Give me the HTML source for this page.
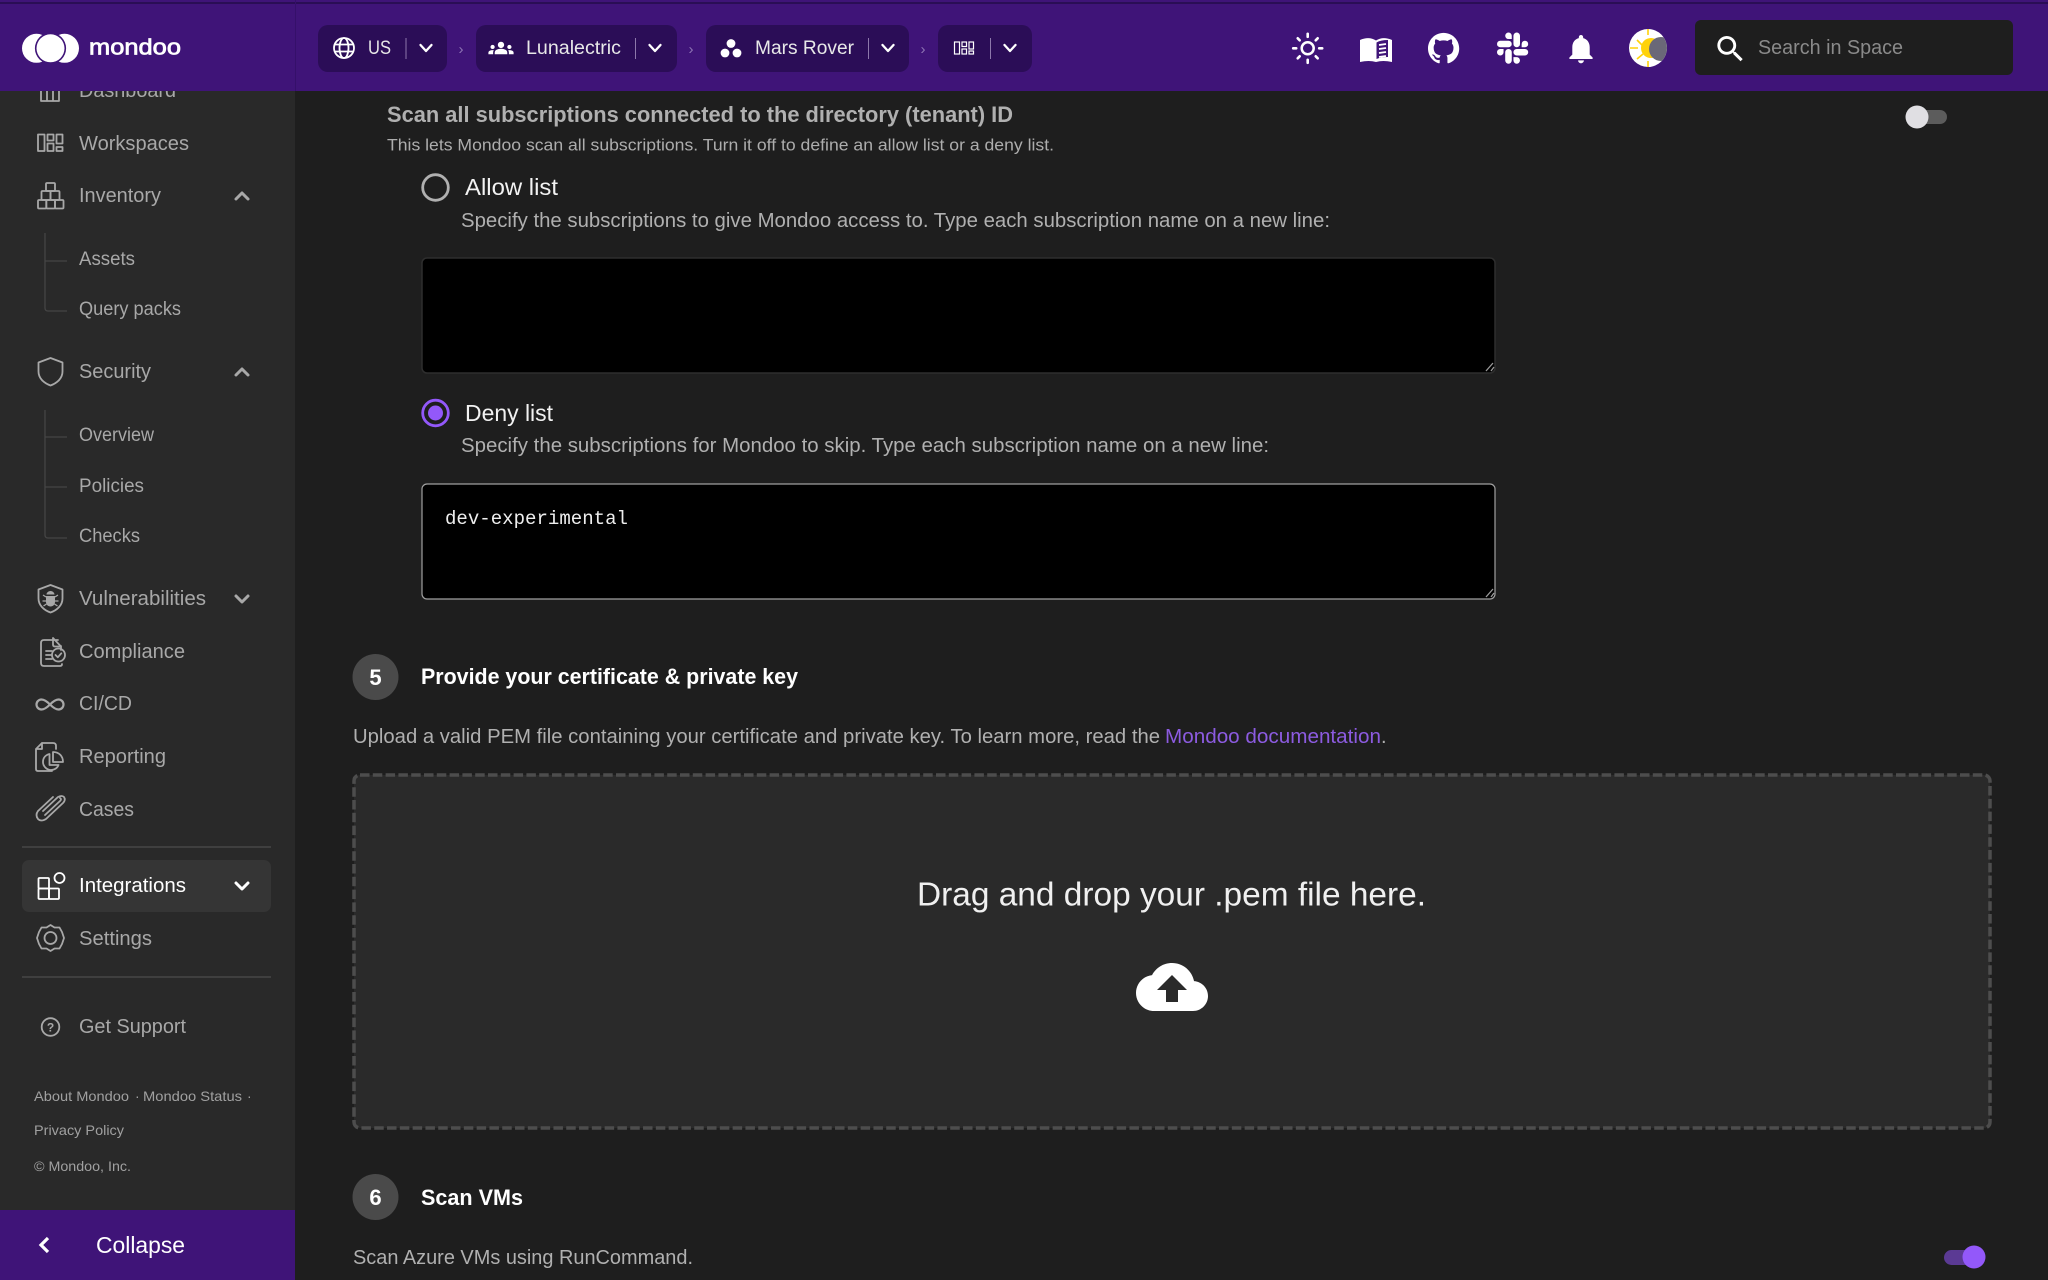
<!DOCTYPE html>
<html lang="en"><head><meta charset="utf-8"><title>Mondoo</title>
<style>
html,body{margin:0;padding:0;background:#1e1e1e;width:2048px;height:1280px;overflow:hidden}
svg{display:block;font-family:"Liberation Sans",Arial,sans-serif}
.n{fill:#a8a8a8;font-size:20px}
.s{fill:#a8a8a8;font-size:19px}
.f{fill:#a0a0a0;font-size:14px}
.w{fill:#fff}
.i{fill:none;stroke:#a8a8a8;stroke-width:1.8;stroke-linejoin:round;stroke-linecap:round}
.t{fill:none;stroke:#454545;stroke-width:1.3}
.c{fill:none;stroke:#fff;stroke-width:3;stroke-linecap:round;stroke-linejoin:round}
.p{fill:#b0b0b0;font-size:20px}
</style></head><body>
<svg xmlns="http://www.w3.org/2000/svg" width="2048" height="1280" viewBox="0 0 2048 1280">
<rect width="2048" height="1280" fill="#1e1e1e"/>
<!-- sidebar -->
<rect x="0" y="0" width="295" height="1280" fill="#292929"/>
<path class="i" d="M41 85h18v16H41zM47 85v16M53 85v16"/>
<text class="n" x="79" y="97" textLength="97" lengthAdjust="spacingAndGlyphs">Dashboard</text>
<g class="i"><rect x="38" y="134.500" width="6.500" height="16.500"/><rect x="47.500" y="134.500" width="6" height="6"/><rect x="47.500" y="143.500" width="6" height="7.500"/><rect x="56.500" y="134.500" width="6" height="9"/><rect x="56.500" y="147" width="6" height="4"/></g>
<text class="n" x="79" y="150" textLength="110" lengthAdjust="spacingAndGlyphs">Workspaces</text>
<g class="i"><rect x="46" y="183" width="9" height="8" rx="1"/><rect x="41.500" y="191" width="9" height="9" rx="1"/><rect x="50.500" y="191" width="9" height="9" rx="1"/><rect x="38" y="200" width="8.300" height="8.500" rx="1"/><rect x="46.300" y="200" width="8.700" height="8.500" rx="1"/><rect x="55" y="200" width="8.500" height="8.500" rx="1"/></g>
<text class="n" x="79" y="202" textLength="82" lengthAdjust="spacingAndGlyphs">Inventory</text>
<path class="c" style="stroke:#a8a8a8" d="M236 199l6-6 6 6"/>
<path class="t" d="M45 233v75q0 3 3 3h19M45 261h22"/>
<text class="s" x="79" y="265" textLength="56" lengthAdjust="spacingAndGlyphs">Assets</text>
<text class="s" x="79" y="315" textLength="102" lengthAdjust="spacingAndGlyphs">Query packs</text>
<path class="i" d="M50.500 358l12 4.500v9c0 6.500-5 11.500-12 14-7-2.500-12-7.500-12-14v-9z"/>
<text class="n" x="79" y="378" textLength="72" lengthAdjust="spacingAndGlyphs">Security</text>
<path class="c" style="stroke:#a8a8a8" d="M236 375l6-6 6 6"/>
<path class="t" d="M45 410v125q0 3 3 3h19M45 437h22M45 487h22"/>
<text class="s" x="79" y="441" textLength="75" lengthAdjust="spacingAndGlyphs">Overview</text>
<text class="s" x="79" y="492" textLength="65" lengthAdjust="spacingAndGlyphs">Policies</text>
<text class="s" x="79" y="542" textLength="61" lengthAdjust="spacingAndGlyphs">Checks</text>
<path class="i" d="M50.500 585l12 4.500v9c0 6.500-5 11.500-12 14-7-2.500-12-7.500-12-14v-9z"/>
<path d="M50.500 591c2.500 0 4 2 4 3.500h-8c0-1.500 1.500-3.500 4-3.500zM46 596h9v6c0 2.500-2 4.500-4.500 4.500S46 604.500 46 602z" fill="#a8a8a8"/><path d="M43 595l3 2M58 595l-3 2M42.500 601H46M58.500 601H55M43.500 606l3-2M57.500 606l-3-2" stroke="#a8a8a8" stroke-width="1.300" fill="none"/>
<text class="n" x="79" y="605" textLength="127" lengthAdjust="spacingAndGlyphs">Vulnerabilities</text>
<path class="c" style="stroke:#a8a8a8" d="M236 596l6 6 6-6"/>
<path class="i" d="M58 640H44q-3 0-3 3v20q0 3 3 3h16q2 0 2-2M53 638.500v6q0 2 2 2h6l-8-8.500zM61 646v4M46 651h6M46 655h5M46 659h6"/>
<circle class="i" cx="58.500" cy="655" r="6.500"/><path class="i" d="M55.500 655l2.300 2.300 3.500-4"/>
<text class="n" x="79" y="658" textLength="106" lengthAdjust="spacingAndGlyphs">Compliance</text>
<path class="i" style="stroke-width:2.200" d="M50 704.500c-3-3-5.500-5-8.500-5s-5 2.500-5 5 2 5 5 5 5.500-2 8.500-5 5.500-5 8.500-5 5 2.500 5 5-2 5-5 5-5.500-2-8.500-5z"/>
<text class="n" x="79" y="710" textLength="53" lengthAdjust="spacingAndGlyphs">CI/CD</text>
<path class="i" d="M42 743h11q3 0 3 3v3M42 743l-6 6v20q0 2 2 2h14M42 743v6h-6"/>
<path class="i" d="M53 752v10h10c0-6-4-10-10-10z"/><path class="i" d="M49.500 754c-4 1-6.500 4-6.500 8s3.500 8 8 8c3.500 0 6.500-2 7.500-5H49.500z"/>
<text class="n" x="79" y="763" textLength="87" lengthAdjust="spacingAndGlyphs">Reporting</text>
<path class="i" d="M43 811l15-14q4-2 6 0 2 3-1 6l-17 16q-5 3-8 0-3-4 0-8l15-14M45 815l15-14q2-2 0-3"/>
<text class="n" x="79" y="816" textLength="55" lengthAdjust="spacingAndGlyphs">Cases</text>
<rect x="22" y="846" width="249" height="2" fill="#3f3f3f"/>
<rect x="22" y="860" width="249" height="52" rx="7" fill="#353535"/>
<g fill="none" stroke="#fff" stroke-width="1.800"><rect x="38.500" y="878" width="10.500" height="10.500" rx="1"/><rect x="38.500" y="888.500" width="10.500" height="10.500" rx="1"/><rect x="49" y="888.500" width="10" height="10.500" rx="1"/><circle cx="59.500" cy="878" r="5"/></g>
<text class="n" x="79" y="892" textLength="107" lengthAdjust="spacingAndGlyphs" style="fill:#fff">Integrations</text>
<path class="c" d="M236 883l6 6 6-6"/>
<path class="i" d="M50.500 925l4 2.500h5l2.500 4.500 2 6-2 6-2.500 4.500h-5l-4 2.500-4-2.500h-5L39 944l-2-6 2-6 2.500-4.500h5z"/><circle class="i" cx="50.500" cy="938" r="6"/>
<text class="n" x="79" y="945" textLength="73" lengthAdjust="spacingAndGlyphs">Settings</text>
<rect x="22" y="976" width="249" height="2" fill="#3f3f3f"/>
<circle class="i" cx="50.500" cy="1027" r="8.800"/>
<text x="50.500" y="1031.500" text-anchor="middle" font-size="12" font-weight="700" fill="#a8a8a8">?</text>
<text class="n" x="79" y="1033" textLength="107" lengthAdjust="spacingAndGlyphs">Get Support</text>
<text class="f" x="34" y="1101" textLength="95" lengthAdjust="spacingAndGlyphs">About Mondoo</text>
<text class="f" x="135" y="1101">·</text>
<text class="f" x="143" y="1101" textLength="99" lengthAdjust="spacingAndGlyphs">Mondoo Status</text>
<text class="f" x="247" y="1101">·</text>
<text class="f" x="34" y="1135" textLength="90" lengthAdjust="spacingAndGlyphs">Privacy Policy</text>
<text class="f" x="34" y="1171" textLength="97" lengthAdjust="spacingAndGlyphs">© Mondoo, Inc.</text>
<rect x="0" y="1210" width="295" height="70" fill="#3f1478"/>
<path d="M48 1238l-7 7 7 7" fill="none" stroke="#fff" stroke-width="3.200"/>
<text x="96" y="1253" font-size="23" fill="#fff" textLength="89" lengthAdjust="spacingAndGlyphs">Collapse</text>
<!-- main -->
<text x="387" y="122" font-size="22" font-weight="700" fill="#b0b0b0" textLength="626" lengthAdjust="spacingAndGlyphs">Scan all subscriptions connected to the directory (tenant) ID</text>
<text x="387" y="150.500" font-size="17" fill="#adadad" textLength="667" lengthAdjust="spacingAndGlyphs">This lets Mondoo scan all subscriptions. Turn it off to define an allow list or a deny list.</text>
<rect x="1918" y="110" width="29" height="14" rx="7" fill="#5c5c5c"/><circle cx="1917" cy="117" r="11.500" fill="#e0dfe3"/>
<circle cx="435.500" cy="187.500" r="12.800" fill="none" stroke="#b0b0b0" stroke-width="2.800"/>
<text x="465" y="195" font-size="23" fill="#f2f2f2" textLength="93" lengthAdjust="spacingAndGlyphs">Allow list</text>
<text class="p" x="461" y="227" textLength="869" lengthAdjust="spacingAndGlyphs">Specify the subscriptions to give Mondoo access to. Type each subscription name on a new line:</text>
<rect x="422" y="258" width="1073" height="115" rx="5" fill="#000" stroke="#2e2e2e" stroke-width="1.500"/>
<path d="M1486 371l7-8M1491 371l3-4" stroke="#9a9a9a" stroke-width="1.300" fill="none"/>
<circle cx="435.500" cy="413" r="12.800" fill="none" stroke="#9358fa" stroke-width="2.800"/><circle cx="435.500" cy="413" r="7.500" fill="#9358fa"/>
<text x="465" y="421" font-size="23" fill="#f2f2f2" textLength="88" lengthAdjust="spacingAndGlyphs">Deny list</text>
<text class="p" x="461" y="452" textLength="808" lengthAdjust="spacingAndGlyphs">Specify the subscriptions for Mondoo to skip. Type each subscription name on a new line:</text>
<rect x="422" y="484" width="1073" height="115" rx="5" fill="#000" stroke="#a0a0a0" stroke-width="1.200"/>
<path d="M1486 597l7-8M1491 597l3-4" stroke="#9a9a9a" stroke-width="1.300" fill="none"/>
<text x="445" y="524" font-family="'Liberation Mono',monospace" font-size="19" fill="#eee" textLength="183" lengthAdjust="spacingAndGlyphs">dev-experimental</text>
<circle cx="375.500" cy="677" r="23" fill="#4a4a4a"/>
<text x="375.500" y="685" text-anchor="middle" font-size="22" font-weight="700" fill="#fff">5</text>
<text x="421" y="684" font-size="22" font-weight="700" fill="#fff" textLength="377" lengthAdjust="spacingAndGlyphs">Provide your certificate &amp; private key</text>
<text class="p" x="353" y="743" textLength="807" lengthAdjust="spacingAndGlyphs">Upload a valid PEM file containing your certificate and private key. To learn more, read the</text>
<text x="1165" y="743" font-size="20" fill="#8c5be0" textLength="216" lengthAdjust="spacingAndGlyphs">Mondoo documentation</text>
<text class="p" x="1381" y="743">.</text>
<rect x="354" y="775" width="1636" height="353" rx="6" fill="#2a2a2a" stroke="#4d4d4d" stroke-width="3.500" stroke-dasharray="9.500 3.300"/>
<text x="917" y="905.500" font-size="33" fill="#f0f0f0" textLength="509" lengthAdjust="spacingAndGlyphs">Drag and drop your .pem file here.</text>
<path transform="translate(1136 951) scale(3)" fill="#fff" d="M19.35 10.04C18.67 6.59 15.64 4 12 4 9.11 4 6.6 5.64 5.35 8.04 2.34 8.36 0 10.91 0 14c0 3.31 2.69 6 6 6h13c2.76 0 5-2.24 5-5 0-2.64-2.05-4.78-4.65-4.96zM14 13v4h-4v-4H7l5-5 5 5h-3z"/>
<circle cx="375.500" cy="1197" r="23" fill="#4a4a4a"/>
<text x="375.500" y="1205" text-anchor="middle" font-size="22" font-weight="700" fill="#fff">6</text>
<text x="421" y="1205" font-size="22" font-weight="700" fill="#fff" textLength="102" lengthAdjust="spacingAndGlyphs">Scan VMs</text>
<text class="p" x="353" y="1264" textLength="340" lengthAdjust="spacingAndGlyphs">Scan Azure VMs using RunCommand.</text>
<rect x="1944" y="1250" width="30" height="15" rx="7.500" fill="#5b3a94"/><circle cx="1974" cy="1257" r="11.500" fill="#9358fa"/>
<!-- header -->
<rect x="0" y="0" width="2048" height="91" fill="#3f1478"/>
<rect x="0" y="2" width="2048" height="2" fill="#2a0e55"/>
<rect x="295" y="0" width="1" height="91" fill="#35106a"/>
<circle cx="36.500" cy="48.300" r="14.500" fill="#fff"/><circle cx="64.500" cy="48.300" r="14.500" fill="#fff"/><circle cx="50.500" cy="48.300" r="15.600" fill="#3f1478"/><circle cx="50.500" cy="48.300" r="14" fill="#fff"/>
<text x="89" y="54.500" font-size="22" fill="#fff" stroke="#fff" stroke-width=".7" textLength="92" lengthAdjust="spacingAndGlyphs">mondoo</text>
<g fill="#2b0d57"><rect x="318" y="25" width="129" height="47" rx="10"/><rect x="476" y="25" width="201" height="47" rx="10"/><rect x="706" y="25" width="203" height="47" rx="10"/><rect x="938" y="25" width="94" height="47" rx="10"/></g>
<g fill="none" stroke="#fff" stroke-width="1.800"><circle cx="344" cy="48" r="10"/><ellipse cx="344" cy="48" rx="4.500" ry="10"/><path d="M334.500 44.500h19M334.500 51.500h19"/></g>
<text x="368" y="54" font-size="19" fill="#e8e8e8" textLength="23" lengthAdjust="spacingAndGlyphs">US</text>
<rect x="405.500" y="38" width="1" height="21" fill="#8d78ab"/>
<path class="c" style="stroke-width:2.300" d="M420.500 45l5.500 6 5.500-6"/>
<text x="461" y="54" font-size="15" fill="#8e74b4" text-anchor="middle">›</text>
<path transform="translate(488.400 35.400) scale(1.05)" fill="#fff" d="M12 12.750c1.630 0 3.070.39 4.240.9 1.080.48 1.760 1.560 1.760 2.730V18H6v-1.610c0-1.180.68-2.260 1.760-2.730 1.170-.52 2.610-.91 4.240-.91zM4 13c1.100 0 2-.9 2-2s-.9-2-2-2-2 .9-2 2 .9 2 2 2zm1.130 1.100c-.37-.06-.74-.1-1.130-.1-.99 0-1.930.21-2.780.58C.48 14.900 0 15.620 0 16.430V18h4.500v-1.610c0-.83.23-1.610.63-2.290zM20 13c1.100 0 2-.9 2-2s-.9-2-2-2-2 .9-2 2 .9 2 2 2zm4 3.430c0-.81-.48-1.530-1.220-1.850-.85-.37-1.790-.58-2.780-.58-.39 0-.76.04-1.130.1.4.68.63 1.460.63 2.290V18H24v-1.570zM12 6c1.660 0 3 1.340 3 3s-1.340 3-3 3-3-1.340-3-3 1.340-3 3-3z"/>
<text x="526" y="54" font-size="19" fill="#e8e8e8" textLength="95" lengthAdjust="spacingAndGlyphs">Lunalectric</text>
<rect x="635" y="38" width="1" height="21" fill="#8d78ab"/>
<path class="c" style="stroke-width:2.300" d="M649.500 45l5.500 6 5.500-6"/>
<text x="691" y="54" font-size="15" fill="#8e74b4" text-anchor="middle">›</text>
<g fill="#fff"><circle cx="731" cy="43.500" r="4.400"/><circle cx="725" cy="53" r="4.400"/><circle cx="737" cy="53" r="4.400"/></g>
<text x="755" y="54" font-size="19" fill="#e8e8e8" textLength="99" lengthAdjust="spacingAndGlyphs">Mars Rover</text>
<rect x="868" y="38" width="1" height="21" fill="#8d78ab"/>
<path class="c" style="stroke-width:2.300" d="M882.500 45l5.500 6 5.500-6"/>
<text x="923" y="54" font-size="15" fill="#8e74b4" text-anchor="middle">›</text>
<g fill="none" stroke="#fff" stroke-width="1.200"><rect x="954.500" y="42" width="5" height="12"/><rect x="962" y="42" width="4.500" height="4.500"/><rect x="962" y="49" width="4.500" height="5"/><rect x="969" y="42" width="4.500" height="7"/><rect x="969" y="51" width="4.500" height="3"/></g>
<rect x="990" y="38" width="1" height="21" fill="#8d78ab"/>
<path class="c" style="stroke-width:2.300" d="M1004.500 45l5.500 6 5.500-6"/>
<!-- right icons -->
<circle cx="1307.700" cy="48.300" r="6" fill="none" stroke="#fff" stroke-width="2.500"/>
<path d="M1307.700 33.800v3M1307.700 59.800v3M1293.200 48.300h3M1319.200 48.300h3M1297.700 38.300l2 2M1315.700 56.300l2 2M1297.700 58.300l2-2M1315.700 40.300l2-2" stroke="#fff" stroke-width="2.600" stroke-linecap="round"/>
<path fill="#fff" d="M1360 40q9-4 16 .5 7-4.500 16-.5v22q-9-2-16 0-7-2-16 0z"/>
<path fill="#3f1478" d="M1376.500 42.500q4-2.500 11.500-2.500v17q-7 0-11.500 2z"/>
<path d="M1379 45l7-1M1379 49l7-1M1379 53l7-1M1379 57l7-1" stroke="#fff" stroke-width="1.800"/>
<path transform="translate(1428 32.500) scale(1.3)" fill="#fff" d="M12 .297c-6.630 0-12 5.373-12 12 0 5.303 3.438 9.800 8.205 11.385.6.113.82-.258.82-.577 0-.285-.01-1.040-.015-2.040-3.338.724-4.042-1.610-4.042-1.610C4.422 18.070 3.633 17.700 3.633 17.700c-1.087-.744.084-.729.084-.729 1.205.084 1.838 1.236 1.838 1.236 1.070 1.835 2.809 1.305 3.495.998.108-.776.417-1.305.76-1.605-2.665-.3-5.466-1.332-5.466-5.930 0-1.310.465-2.380 1.235-3.220-.135-.303-.54-1.523.105-3.176 0 0 1.005-.322 3.300 1.230.96-.267 1.980-.399 3-.405 1.020.006 2.040.138 3 .405 2.280-1.552 3.285-1.230 3.285-1.230.645 1.653.24 2.873.12 3.176.765.84 1.230 1.910 1.230 3.220 0 4.610-2.805 5.625-5.475 5.920.42.36.81 1.096.81 2.220 0 1.606-.015 2.896-.015 3.286 0 .315.21.69.825.57C20.565 22.092 24 17.592 24 12.297c0-6.627-5.373-12-12-12"/>
<path transform="translate(1497 32.500) scale(1.3)" fill="#fff" d="M5.042 15.165a2.528 2.528 0 0 1-2.520 2.523A2.528 2.528 0 0 1 0 15.165a2.527 2.527 0 0 1 2.522-2.520h2.520v2.520zM6.313 15.165a2.527 2.527 0 0 1 2.521-2.520 2.527 2.527 0 0 1 2.521 2.520v6.313A2.528 2.528 0 0 1 8.834 24a2.528 2.528 0 0 1-2.521-2.522v-6.313zM8.834 5.042a2.528 2.528 0 0 1-2.521-2.520A2.528 2.528 0 0 1 8.834 0a2.528 2.528 0 0 1 2.521 2.522v2.520H8.834zM8.834 6.313a2.528 2.528 0 0 1 2.521 2.521 2.528 2.528 0 0 1-2.521 2.521H2.522A2.528 2.528 0 0 1 0 8.834a2.528 2.528 0 0 1 2.522-2.521h6.312zM18.956 8.834a2.528 2.528 0 0 1 2.522-2.521A2.528 2.528 0 0 1 24 8.834a2.528 2.528 0 0 1-2.522 2.521h-2.522V8.834zM17.688 8.834a2.528 2.528 0 0 1-2.523 2.521 2.527 2.527 0 0 1-2.520-2.521V2.522A2.527 2.527 0 0 1 15.165 0a2.528 2.528 0 0 1 2.523 2.522v6.312zM15.165 18.956a2.528 2.528 0 0 1 2.523 2.522A2.528 2.528 0 0 1 15.165 24a2.527 2.527 0 0 1-2.520-2.522v-2.522h2.520zM15.165 17.688a2.527 2.527 0 0 1-2.520-2.523 2.526 2.526 0 0 1 2.520-2.520h6.313A2.527 2.527 0 0 1 24 15.165a2.528 2.528 0 0 1-2.522 2.523h-6.313z"/>
<path transform="translate(1563.600 31.400) scale(1.45)" fill="#fff" d="M12 22c1.100 0 2-.9 2-2h-4c0 1.100.89 2 2 2zm6-6v-5c0-3.070-1.640-5.640-4.500-6.320V4c0-.83-.67-1.500-1.500-1.500s-1.500.67-1.500 1.500v.68C7.630 5.360 6 7.920 6 11v5l-2 2v1h16v-1l-2-2z"/>
<clipPath id="m"><circle cx="1648" cy="48" r="19"/></clipPath>
<circle cx="1648" cy="48" r="19" fill="#fff"/>
<g clip-path="url(#m)"><path d="M1630 48h8M1637 40l5 5M1637 59l6-5M1648 29v6M1648 61v6" stroke="#ffd20a" stroke-width="1.600"/><circle cx="1651" cy="48" r="10" fill="#ffd20a"/><circle cx="1661" cy="49" r="12" fill="#6a6878"/></g>
<rect x="1695" y="20" width="318" height="55" rx="6" fill="#1e1e1e"/>
<path transform="translate(1713 31.600) scale(1.450)" fill="#fff" d="M15.500 14h-.79l-.28-.27C15.410 12.590 16 11.110 16 9.500 16 5.910 13.090 3 9.500 3S3 5.910 3 9.500 5.910 16 9.500 16c1.610 0 3.090-.59 4.230-1.570l.27.28v.79l5 4.990L20.490 19l-4.990-5zm-6 0C7.010 14 5 11.990 5 9.500S7.010 5 9.500 5 14 7.010 14 9.500 11.990 14 9.500 14z"/>
<text x="1758" y="54" font-size="20" fill="#8a8a8a" textLength="145" lengthAdjust="spacingAndGlyphs">Search in Space</text>
</svg>
</body></html>
